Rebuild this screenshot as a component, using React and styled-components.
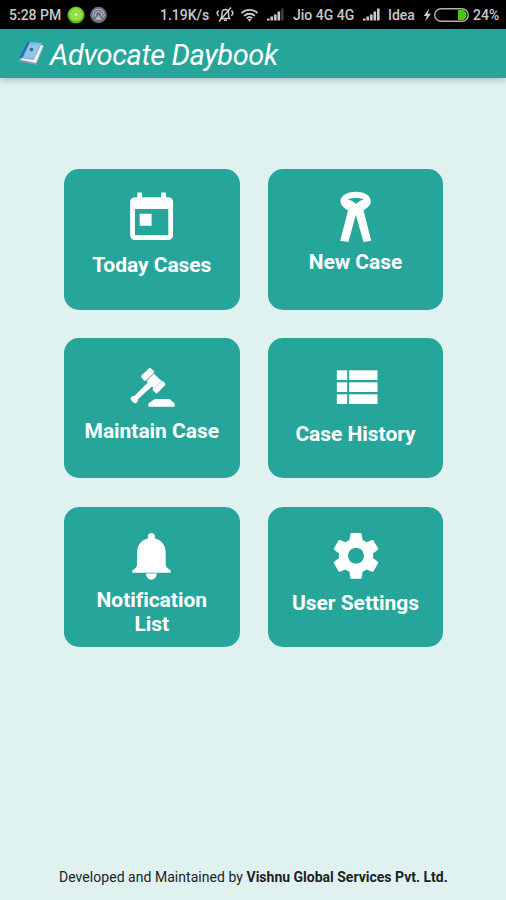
import styled, { createGlobalStyle } from "styled-components";

const colors = {
  teal: "#26a69a",
  page: "#dff2f0",
  status: "#c9c9c9",
};

const App = () => {
  return (
    <>
      <GlobalStyle />
      <Screen>
        <StatusBar>
          <StatusText $width={58}>5:28 PM</StatusText>
          <StatusIcon width="18" height="18" viewBox="0 0 18 18">
            <circle cx="9" cy="9" r="8.6" fill="#5fae1e" />
            <circle cx="9" cy="8.6" r="7" fill="#85dc3a" />
            <circle cx="9" cy="8.5" r="4.2" fill="none" stroke="#a5ea66" />
            <path d="M9 6.5v4M7 8.5h4" stroke="#d5f7ae" strokeWidth="1.6" />
          </StatusIcon>
          <StatusIcon $left={5} width="17" height="18" viewBox="0 0 17 18">
            <circle cx="8.5" cy="9" r="8.3" fill="#6c6e80" />
            <path
              d="M3.6 11.5a5.6 5.6 0 1 1 9.8 0M5.8 10.5a3.2 3.2 0 1 1 5.4 0"
              fill="none"
              stroke="#b5b7c4"
              strokeWidth="1.1"
            />
            <path d="M8.5 9.3l3.6 4.4H4.9z" fill="#b5b7c4" />
          </StatusIcon>
          <StatusText $left={53} $width={56}>
            1.19K/s
          </StatusText>
          <MuteIcon />
          <WifiIcon />
          <SignalIcon left={8} dim />
          <StatusText $left={9} $width={62}>
            Jio 4G 4G
          </StatusText>
          <SignalIcon left={8} />
          <StatusText $left={8} $width={35}>
            Idea
          </StatusText>
          <BatteryIcon />
          <StatusText $left={3} $width={28}>
            24%
          </StatusText>
        </StatusBar>
        <Header>
          <BookIcon />
          <Title>Advocate Daybook</Title>
        </Header>
        <Menu>
          {menuItems.map(({ label, Icon, labelTop }) => (
            <Card key={label}>
              <IconSlot $height={labelTop - 20}>
                <Icon />
              </IconSlot>
              <CardLabel>{label}</CardLabel>
            </Card>
          ))}
        </Menu>
        <Footer>
          Developed and Maintained by <b>Vishnu Global Services Pvt. Ltd.</b>
        </Footer>
      </Screen>
    </>
  );
};

const MuteIcon = () => (
  <StatusIcon width="18" height="17" viewBox="0 0 18 17">
    <path
      d="M5 12.5c1-1.2 1-2.5 1-5C6 5 7.5 3.5 9.2 3.5S12.5 5 12.5 7.5c0 2.5 0 3.8 1 5zM7.8 14.2h3M2.5 4.5L1 7l1.5 3M15.5 4.5L17 7l-1.5 3"
      fill="none"
      stroke={colors.status}
      strokeWidth="1.5"
    />
    <path d="M3 15.5L15 1.5" stroke={colors.status} strokeWidth="1.5" />
  </StatusIcon>
);

const WifiIcon = () => (
  <StatusIcon $left={6} width="19" height="14" viewBox="0 0 18 14">
    <path
      d="M1 5.2a11.5 11.5 0 0 1 16 0M3.6 7.9a7.8 7.8 0 0 1 10.8 0M6.2 10.3a4.2 4.2 0 0 1 5.6 0"
      fill="none"
      stroke={colors.status}
      strokeWidth="1.8"
    />
    <path d="M7.2 11.6a2.6 2.6 0 0 1 3.6 0L9 13.8z" fill={colors.status} />
  </StatusIcon>
);

const SignalIcon = ({ left, dim }) => (
  <StatusIcon $left={left} width="17" height="13" viewBox="0 0 17 13">
    {[2, 4, 6, 9, 12].map((height, i) => (
      <rect
        key={height}
        x={i * 3.5}
        y={12.5 - height}
        width="2.6"
        height={height}
        fill={dim && i === 4 ? "#3c3c3c" : colors.status}
      />
    ))}
  </StatusIcon>
);

const BatteryIcon = () => (
  <StatusIcon width="47" height="16" viewBox="0 0 47 16">
    <path d="M6 1.5L.8 9h3l-1.6 5.5L8 6.8H4.8z" fill={colors.status} />
    <path d="M35 3h5.5c2.5 1.5 3 3 3 5s-.5 3.5-3 5H35z" fill="#4fc414" />
    <rect
      x="11.7"
      y="1.7"
      width="33.5"
      height="12.6"
      rx="6.3"
      fill="none"
      stroke="#b4b4b4"
      strokeWidth="1.4"
    />
  </StatusIcon>
);

const BookIcon = () => (
  <svg width="26" height="24" viewBox="0 0 26 24">
    <path d="M1 19.5L18 23.5 25.5 6 24 4z" fill="#dfe6ec" />
    <path d="M1 18.5l17 3.6L25 5v3l-7 15.8L2 20.5z" fill="#8d9bab" />
    <path d="M2 18l15.5 3.5L25 4.5l-4-1z" fill="#f4f4f4" />
    <path d="M9.5.5L24 2 15.8 19 1 17z" fill="#78b8e3" />
    <path d="M9.5.5L12 .8 4 17.4 1 17z" fill="#286fa8" />
    <path d="M11 4l11-1-6 14-10-.5z" fill="#a6d5f0" opacity=".5" />
    <circle cx="13.5" cy="8.5" r="1.8" fill="#465f75" />
  </svg>
);

const TodayIcon = () => (
  <MenuIcon viewBox="201 87 180 180">
    <g transform="translate(204 90) scale(7.15)">
      <path d="M19 3h-1V1h-2v2H8V1H6v2H5c-1.11 0-1.99.9-1.99 2L3 19c0 1.1.89 2 2 2h14c1.1 0 2-.9 2-2V5c0-1.1-.9-2-2-2zm0 16H5V8h14v11zM7 10h5v5H7z" />
    </g>
  </MenuIcon>
);

const BandIcon = () => (
  <MenuIcon viewBox="196.5 87 180 180">
    <path
      fillRule="evenodd"
      d="M286 95c26 0 45 12 45 28 0 14-13 23-24 29h-42c-12-6-25-15-25-29 0-16 20-28 46-28zM262 118q14 4 24 13 11-9 24-13-24-10-48 0z"
    />
    <path d="M277 134h18l14 16 23 92-23 4-23-82-22 82-25-4 24-92z" />
    <path d="M260 152l17-15M312 152l-17-15" stroke="#b5ded8" strokeWidth="1.5" />
  </MenuIcon>
);

const GavelIcon = () => (
  <MenuIcon viewBox="201 84 180 180">
    <path d="M282 115q4-2 7 1l8 7q2 3-1 6l-23 22q-3 3-6 0l-7-7q-3-4 0-8z" />
    <path d="M297 131l23 22-22 23-23-22z" />
    <path d="M322 152l8 7q3 4 0 7l-22 22q-4 3-7 0l-7-7q-2-4 0-6z" />
    <path d="M280 156l12 12-43 40q1 6-3 9-5 5-10 1l-8-8q-3-5 1-9 4-4 9-3z" />
    <path
      d="M295 131l-21 21M320 153l-22 22"
      stroke="#8ccdc5"
      strokeWidth="2"
    />
    <path d="M280 230v-8q1-5 6-5l12-9q2-1 5-1h39q3 0 5 2l7 8q5 0 5 5v8z" />
  </MenuIcon>
);

const ListIcon = () => (
  <MenuIcon viewBox="196.5 84 180 180">
    {[121, 157, 193].map((y) => (
      <g key={y}>
        <rect x="229" y={y} width="31" height="29" />
        <rect x="266" y={y} width="85" height="29" />
      </g>
    ))}
  </MenuIcon>
);

const BellIcon = () => (
  <MenuIcon viewBox="201 81 180 180">
    <path d="M280 115c-4-7 1-16 9-16s14 9 10 16c22 6 33 22 33 44v35q1 9 15 17v7H232v-7q14-8 14-17v-35c0-22 12-38 34-44z" />
    <path d="M273 220h32c0 10-6 19-16 19s-16-9-16-19z" />
    <path d="M273 220h32" stroke="#a8d9d3" strokeWidth="4" />
  </MenuIcon>
);

const SettingsIcon = () => (
  <MenuIcon viewBox="196.5 81 180 180">
    <g transform="translate(204.3 85.3) scale(6.85)">
      <path d="M19.43 12.98c.04-.32.07-.64.07-.98s-.03-.66-.07-.98l2.11-1.65c.19-.15.24-.42.12-.64l-2-3.46c-.12-.22-.39-.3-.61-.22l-2.49 1c-.52-.4-1.08-.73-1.69-.98l-.38-2.65C14.46 2.18 14.25 2 14 2h-4c-.25 0-.46.18-.49.42l-.38 2.65c-.61.25-1.17.59-1.69.98l-2.49-1c-.23-.09-.49 0-.61.22l-2 3.46c-.13.22-.07.49.12.64l2.11 1.65c-.04.32-.07.65-.07.98s.03.66.07.98l-2.11 1.65c-.19.15-.24.42-.12.64l2 3.46c.12.22.39.3.61.22l2.49-1c.52.4 1.08.73 1.69.98l.38 2.65c.03.24.24.42.49.42h4c.25 0 .46-.18.49-.42l.38-2.65c.61-.25 1.17-.59 1.69-.98l2.49 1c.23.09.49 0 .61-.22l2-3.46c.12-.22.07-.49-.12-.64l-2.11-1.65zM12 15.5c-1.93 0-3.5-1.57-3.5-3.5s1.57-3.5 3.5-3.5 3.5 1.57 3.5 3.5-1.57 3.5-3.5 3.5z" />
    </g>
  </MenuIcon>
);

const GlobalStyle = createGlobalStyle`
  * {
    box-sizing: border-box;
  }
  body {
    margin: 0;
    font-family: Roboto, sans-serif;
    background-color: ${colors.page};
  }
`;

const Screen = styled.div`
  display: flex;
  flex-direction: column;
  width: 506px;
  height: 900px;
  overflow: hidden;
  background-color: ${colors.page};
`;

const StatusBar = styled.div`
  display: flex;
  align-items: center;
  flex-shrink: 0;
  height: 29px;
  padding-left: 9px;
  background-color: #000;
`;

const StatusText = styled.span`
  flex: none;
  width: ${({ $width }) => $width}px;
  margin-left: ${({ $left = 0 }) => $left}px;
  font-size: 14px;
  font-weight: 500;
  line-height: 16px;
  white-space: nowrap;
  color: ${colors.status};
`;

const StatusIcon = styled.svg`
  flex: none;
  margin-left: ${({ $left = 0 }) => $left}px;
`;

const Header = styled.header`
  display: flex;
  align-items: center;
  flex-shrink: 0;
  height: 49px;
  padding: 0 0 1px 18px;
  background-color: ${colors.teal};
  box-shadow: 0 2px 7px rgba(0, 0, 0, 0.22);
`;

const Title = styled.h1`
  margin: 4px 0 0 6px;
  font-size: 29px;
  font-style: italic;
  font-weight: 400;
  line-height: 36px;
  letter-spacing: -0.38px;
  white-space: nowrap;
  color: #fff;
`;

const Menu = styled.main`
  display: grid;
  grid-template-columns: repeat(2, 175.5px);
  grid-auto-rows: 140.5px;
  gap: 28.25px;
  padding: 91px 0 0 64px;
`;

const Card = styled.button`
  display: flex;
  flex-direction: column;
  align-items: center;
  padding: 20px 16px 0;
  border: none;
  border-radius: 15px;
  font-family: inherit;
  background-color: ${colors.teal};
`;

const IconSlot = styled.div`
  flex: none;
  height: ${({ $height }) => $height}px;
`;

const MenuIcon = styled.svg`
  display: block;
  width: 60px;
  height: 60px;
  fill: #fff;
`;

const CardLabel = styled.span`
  font-size: 21px;
  font-weight: 700;
  line-height: 24.5px;
  letter-spacing: -0.04px;
  text-align: center;
  color: #fff;
`;

const Footer = styled.footer`
  margin-top: auto;
  padding: 0 0 14px 59px;
  font-size: 14px;
  line-height: 17px;
  letter-spacing: 0.04px;
  white-space: nowrap;
  color: #1c2423;

  b {
    font-weight: 700;
    letter-spacing: 0;
  }
`;

const menuItems = [
  { label: "Today Cases", Icon: TodayIcon, labelTop: 84 },
  { label: "New Case", Icon: BandIcon, labelTop: 81 },
  { label: "Maintain Case", Icon: GavelIcon, labelTop: 81 },
  { label: "Case History", Icon: ListIcon, labelTop: 84 },
  { label: "Notification List", Icon: BellIcon, labelTop: 81 },
  { label: "User Settings", Icon: SettingsIcon, labelTop: 84 },
];

export default App;
